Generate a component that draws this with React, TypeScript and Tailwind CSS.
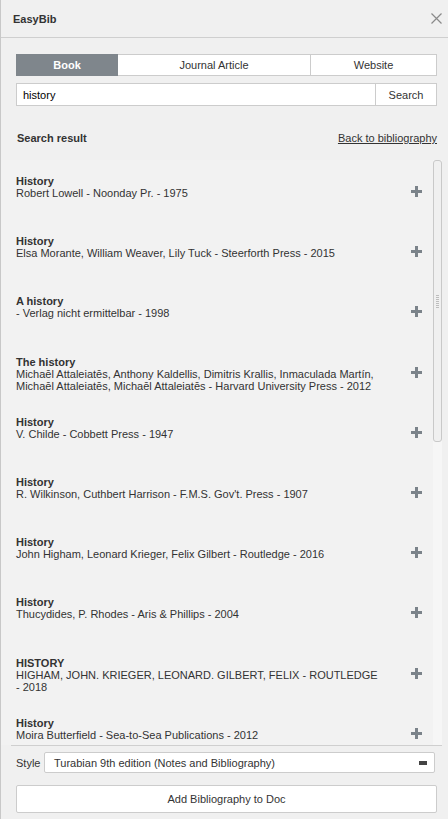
import React from "react";

const items: { title: string; lines: string[] }[] = [
  { title: "History", lines: ["Robert Lowell - Noonday Pr. - 1975"] },
  { title: "History", lines: ["Elsa Morante, William Weaver, Lily Tuck - Steerforth Press - 2015"] },
  { title: "A history", lines: ["- Verlag nicht ermittelbar - 1998"] },
  {
    title: "The history",
    lines: [
      "Michaēl Attaleiatēs, Anthony Kaldellis, Dimitris Krallis, Inmaculada Martín,",
      "Michaēl Attaleiatēs, Michaēl Attaleiatēs - Harvard University Press - 2012",
    ],
  },
  { title: "History", lines: ["V. Childe - Cobbett Press - 1947"] },
  { title: "History", lines: ["R. Wilkinson, Cuthbert Harrison - F.M.S. Gov't. Press - 1907"] },
  { title: "History", lines: ["John Higham, Leonard Krieger, Felix Gilbert - Routledge - 2016"] },
  { title: "History", lines: ["Thucydides, P. Rhodes - Aris & Phillips - 2004"] },
  {
    title: "HISTORY",
    lines: ["HIGHAM, JOHN. KRIEGER, LEONARD. GILBERT, FELIX - ROUTLEDGE", "- 2018"],
  },
  { title: "History", lines: ["Moira Butterfield - Sea-to-Sea Publications - 2012"] },
];

function Plus() {
  return (
    <svg width="11" height="11" viewBox="0 0 11 11" className="shrink-0 mt-[11px]">
      <rect x="0" y="4" width="11" height="3" fill="#7b838a" />
      <rect x="4" y="0" width="3" height="11" fill="#7b838a" />
    </svg>
  );
}

export default function App() {
  return (
    <div className="w-[448px] h-[819px] overflow-hidden bg-[#f0f0f0] border-l border-[#c8c8c8] flex flex-col font-['Liberation_Sans',Arial,sans-serif] text-[11px] leading-[12px] text-[#333]">
      {/* header */}
      <div className="h-[38px] shrink-0 border-b border-[#cfcfcf] flex items-center justify-between pl-[12px] pr-[6px]">
        <span className="font-bold text-[11px] text-[#333]">EasyBib</span>
        <svg width="11" height="11" viewBox="0 0 11 11" className="mr-0">
          <path d="M0.5 0.5 L10.5 10.5 M10.5 0.5 L0.5 10.5" stroke="#8a8a8a" strokeWidth="1.2" />
        </svg>
      </div>

      {/* tabs */}
      <div className="mt-[16px] ml-[15px] w-[421px] h-[22px] flex shrink-0">
        <div className="w-[102px] bg-[#7f868c] text-white font-bold flex items-center justify-center">Book</div>
        <div className="w-[192px] bg-white border-y border-[#cccccc] flex items-center justify-center">
          Journal Article
        </div>
        <div className="w-[127px] bg-white border border-[#cccccc] flex items-center justify-center">Website</div>
      </div>

      {/* search */}
      <div className="mt-[7px] ml-[15px] w-[421px] h-[23px] flex shrink-0 bg-white border border-[#cccccc]">
        <div className="flex-1 flex items-center pl-[6px] text-black">history</div>
        <div className="w-[61px] border-l border-[#cccccc] flex items-center justify-center">Search</div>
      </div>

      {/* search result label */}
      <div className="mt-[22px] h-[20px] shrink-0 flex items-center justify-between pl-[16px] pr-[11px]">
        <span className="font-bold">Search result</span>
        <span className="underline">Back to bibliography</span>
      </div>

      {/* list */}
      <div className="mt-[12px] h-[585px] shrink-0 flex mr-[6px] bg-[#f2f2f2]">
        <div className="flex-1 overflow-hidden pl-[15px] pr-[11px]">
          {items.map((it, i) => (
            <div key={i} className="h-[60.2px] pt-[15px] flex items-start justify-between">
              <div>
                <div className="font-bold">{it.title}</div>
                {it.lines.map((l, j) => (
                  <div key={j}>{l}</div>
                ))}
              </div>
              <Plus />
            </div>
          ))}
        </div>
        <div className="w-[9px] bg-[#f6f6f6] shrink-0">
          <div className="h-[282px] border border-[#c9c9c9] rounded-[3px] bg-[#f0f0f0] flex items-center justify-center">
            <div className="flex flex-col gap-[1px]">
              {[0, 1, 2, 3, 4, 5, 6].map((k) => (
                <div key={k} className="w-[3px] h-[1px] bg-[#bdbdbd]" />
              ))}
            </div>
          </div>
        </div>
      </div>

      {/* bottom */}
      <div className="ml-[10px] mr-[6px] border-t border-[#cfcfcf] shrink-0" />
      <div className="mt-[6px] h-[21px] flex items-center shrink-0">
        <div className="w-[43px] pl-[15px]">Style</div>
        <div className="w-[391px] h-full bg-white border border-[#cccccc] rounded-[2px] flex items-center justify-between pl-[9px] pr-[7px]">
          <span>Turabian 9th edition (Notes and Bibliography)</span>
          <div className="w-[8px] h-[4px] bg-[#444]" />
        </div>
      </div>
      <div className="mt-[12px] ml-[15px] w-[421px] h-[28px] shrink-0 bg-white border border-[#cccccc] rounded-[2px] flex items-center justify-center">
        Add Bibliography to Doc
      </div>
    </div>
  );
}
